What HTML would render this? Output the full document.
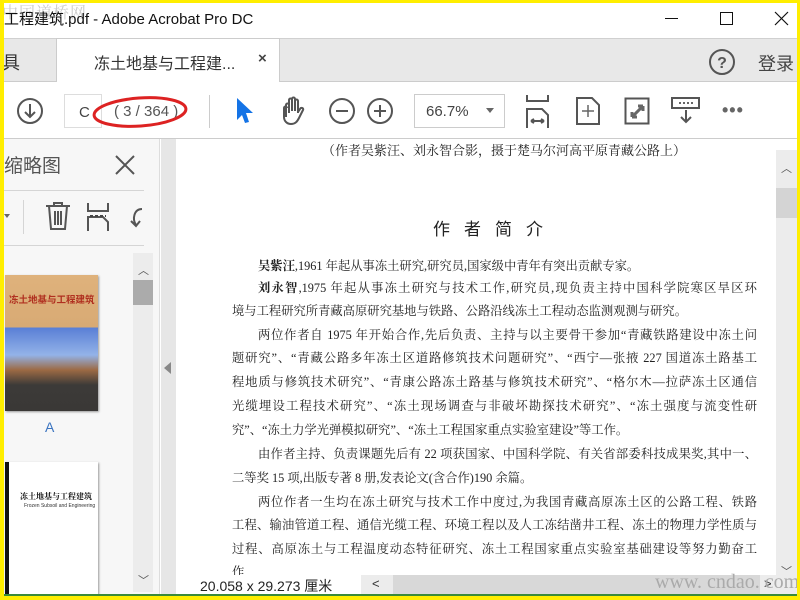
<!DOCTYPE html>
<html><head><meta charset="utf-8"><style>
*{margin:0;padding:0;box-sizing:border-box}
body{width:800px;height:600px;overflow:hidden;background:#fff;position:relative;font-family:"Liberation Sans","Noto Sans CJK SC",sans-serif}
.a{position:absolute}
.doc{font-family:"Liberation Serif","Noto Serif CJK SC",serif;font-size:12.3px;color:#222;white-space:nowrap}
.j{position:absolute;left:232px;width:525px;text-align:justify;text-align-last:justify;height:18px;line-height:18px;overflow:hidden}
.i{left:258px;width:499px}
.ico{stroke:#555;fill:none;stroke-width:2}
</style></head><body>
<!-- title bar -->
<div class="a" style="left:0;top:0;width:800px;height:38px;background:#fff"></div>
<div class="a" style="left:2px;top:0;font-size:16px;color:#ccc;letter-spacing:1px;font-family:'Noto Serif CJK SC',serif">中国道桥网</div>
<div class="a" style="left:4px;top:8px;font-size:15px;color:#111">工程建筑.pdf - Adobe Acrobat Pro DC</div>
<div class="a" style="left:665px;top:18px;width:13px;height:1px;background:#111"></div>
<div class="a" style="left:720px;top:12px;width:13px;height:13px;border:1px solid #111"></div>
<svg class="a" style="left:774px;top:11px" width="15" height="15"><path d="M1 1L14 14M14 1L1 14" stroke="#111" stroke-width="1.2"/></svg>
<!-- tab bar -->
<div class="a" style="left:0;top:38px;width:800px;height:44px;background:#e8e8e8;border-top:1px solid #d0d0d0;border-bottom:1px solid #ccc"></div>
<div class="a" style="left:56px;top:38px;width:224px;height:44px;background:#fff;border-left:1px solid #ccc;border-right:1px solid #ccc;border-top:1px solid #ccc"></div>
<div class="a" style="left:2px;top:49px;font-size:18px;color:#333">具</div>
<div class="a" style="left:94px;top:50px;font-size:16px;color:#333">冻土地基与工程建...</div>
<div class="a" style="left:258px;top:50px;font-size:15px;color:#444;font-weight:bold">×</div>
<svg class="a" style="left:708px;top:48px" width="28" height="28"><circle cx="14" cy="14" r="12" class="ico"/><text x="14" y="20" text-anchor="middle" font-size="16" font-weight="bold" fill="#555" font-family="Liberation Sans">?</text></svg>
<div class="a" style="left:758px;top:50px;font-size:18px;color:#444">登录</div>
<!-- toolbar -->
<div class="a" style="left:0;top:82px;width:800px;height:57px;background:#fff;border-bottom:1px solid #ccc"></div>
<svg class="a" style="left:16px;top:97px" width="28" height="28"><circle cx="14" cy="14" r="12" class="ico"/><path d="M14 7V20M9 15l5 5 5-5" class="ico"/></svg>
<div class="a" style="left:64px;top:94px;width:38px;height:34px;border:1px solid #ddd;background:#fff;font-size:15px;color:#444;padding:9px 0 0 14px">C</div>
<div class="a" style="left:114px;top:103px;font-size:15px;color:#555">( 3 / 364 )</div>
<svg class="a" style="left:92px;top:92px" width="100" height="40"><ellipse cx="48" cy="20" rx="46" ry="14" fill="none" stroke="#d22" stroke-width="3" transform="rotate(-4 48 20)"/></svg>
<div class="a" style="left:209px;top:95px;width:1px;height:33px;background:#ccc"></div>
<svg class="a" style="left:234px;top:96px" width="22" height="30"><path d="M3 2L19 17L12 17L15 26L11 27L8 19L3 24Z" fill="#1473e6"/></svg>
<svg class="a" style="left:278px;top:95px" width="30" height="32"><path d="M8 22V10c0-2 3-2 3 0v8M11 15V5c0-2 3-2 3 0v11M14 15V4c0-2 3-2 3 0v12M17 16V6c0-2 3-2 3 0v12M20 17l2-3c1-2 4-1 3 1l-4 8c-2 4-4 6-8 6-4 0-7-3-7-7V13c0-2 3-2 3 0" class="ico" stroke-width="1.8"/></svg>
<svg class="a" style="left:328px;top:97px" width="28" height="28"><circle cx="14" cy="14" r="12" class="ico"/><path d="M8 14H20" class="ico"/></svg>
<svg class="a" style="left:366px;top:97px" width="28" height="28"><circle cx="14" cy="14" r="12" class="ico"/><path d="M8 14H20M14 8V20" class="ico"/></svg>
<div class="a" style="left:414px;top:94px;width:91px;height:34px;border:1px solid #ccc;font-size:15px;color:#444;padding:8px 0 0 11px">66.7%</div>
<div class="a" style="left:486px;top:108px;border-left:4px solid transparent;border-right:4px solid transparent;border-top:5px solid #666"></div>
<svg class="a" style="left:525px;top:95px" width="26" height="33"><path d="M2 0V6H23V0M2 33V14H17l6 6V33M6 26H19M6 26l3-2M6 26l3 2M19 26l-3-2M19 26l-3 2" class="ico" stroke-width="2.5" stroke="#666"/></svg>
<svg class="a" style="left:575px;top:96px" width="26" height="30"><path d="M2 2H17l7 7V28H2Z" class="ico" stroke="#666" stroke-width="2.5"/><path d="M13 9V21M7 15H19" stroke="#666" stroke-width="1.5"/></svg>
<svg class="a" style="left:624px;top:97px" width="26" height="28"><rect x="1.5" y="1.5" width="23" height="25" class="ico" stroke="#666" stroke-width="2.5"/><path d="M8 20L19 9M8 20V15M8 20H13M19 9V14M19 9H14" stroke="#666" stroke-width="3"/></svg>
<svg class="a" style="left:671px;top:96px" width="30" height="30"><rect x="1" y="2" width="27" height="10" class="ico" stroke="#666" stroke-width="2.5"/><path d="M8 7h2M12 7h2M16 7h2M20 7h2" stroke="#666" stroke-width="2"/><path d="M15 14V26M10 21l5 5 5-5" class="ico" stroke="#666" stroke-width="2.5"/></svg>
<div class="a" style="left:722px;top:100px;font-size:18px;color:#666;font-weight:bold;letter-spacing:1px">•••</div>
<!-- left panel -->
<div class="a" style="left:0;top:139px;width:160px;height:456px;background:#f7f7f7;border-right:1px solid #ddd"></div>
<div class="a" style="left:4px;top:151px;font-size:19px;color:#555">缩略图</div>
<svg class="a" style="left:114px;top:154px" width="22" height="22"><path d="M2 2L20 20M20 2L2 20" stroke="#555" stroke-width="2"/></svg>
<div class="a" style="left:4px;top:190px;width:140px;height:1px;background:#d5d5d5"></div>
<div class="a" style="left:4px;top:245px;width:140px;height:1px;background:#d5d5d5"></div>
<div class="a" style="left:23px;top:200px;width:1px;height:34px;background:#d5d5d5"></div>
<div class="a" style="left:4px;top:214px;border-left:3px solid transparent;border-right:3px solid transparent;border-top:4px solid #666"></div>
<svg class="a" style="left:44px;top:201px" width="28" height="30"><path d="M2 5H26M10 5V2H18V5M5 5L7 28H21L23 5M11 10V24M14 10V24M17 10V24" class="ico" stroke="#aaa" stroke-width="2"/></svg>
<svg class="a" style="left:86px;top:203px" width="24" height="28"><path d="M2 0V8H22V0M2 28V14H17l5 5V28" class="ico" stroke="#444" stroke-width="2.5"/><path d="M4 13H20" stroke="#444" stroke-width="2" stroke-dasharray="3 2"/></svg>
<svg class="a" style="left:126px;top:205px" width="20" height="26"><path d="M16 4C8 4 6 14 10 20M5 16l5 5 4-5" class="ico" stroke="#bbb" stroke-width="2.5"/></svg>
<div class="a" style="left:133px;top:253px;width:20px;height:339px;background:#ececec"></div>
<div class="a" style="left:133px;top:280px;width:20px;height:25px;background:#ababab"></div>
<div class="a" style="left:138px;top:262px;font-size:11px;color:#555">︿</div>
<div class="a" style="left:138px;top:572px;font-size:11px;color:#555">﹀</div>
<div class="a" style="left:5px;top:275px;width:93px;height:136px;background:linear-gradient(#dfb27c 0,#d8aa74 52px,#5a7fd6 53px,#93b3e8 80px,#9c6a44 95px,#3c3a38 110px,#3a3836 136px);box-shadow:1px 1px 2px #999"></div>
<div class="a" style="left:9px;top:292px;font-size:9.5px;color:#b03020;font-weight:bold;white-space:nowrap">冻土地基与工程建筑</div>
<div class="a" style="left:45px;top:419px;font-size:14px;color:#3b74c0">A</div>
<div class="a" style="left:5px;top:462px;width:93px;height:133px;background:#fff;border-left:4px solid #111;box-shadow:1px 1px 2px #999"></div>
<div class="a" style="left:20px;top:491px;font-size:8px;color:#111;font-weight:bold;white-space:nowrap;font-family:'Noto Serif CJK SC',serif">冻土地基与工程建筑</div>
<div class="a" style="left:24px;top:503px;font-size:5px;color:#333;white-space:nowrap">Frozen Subsoil and Engineering</div>
<!-- splitter -->
<div class="a" style="left:161px;top:139px;width:15px;height:456px;background:#e6e6e6"></div>
<div class="a" style="left:164px;top:362px;border-top:6px solid transparent;border-bottom:6px solid transparent;border-right:7px solid #888"></div>
<!-- page -->
<div class="a" style="left:176px;top:139px;width:600px;height:436px;background:#fff"></div>
<div class="a" style="left:776px;top:150px;width:21px;height:425px;background:#ececec"></div>
<div class="a" style="left:776px;top:188px;width:21px;height:30px;background:#d4d4d4"></div>
<div class="a" style="left:781px;top:160px;font-size:11px;color:#555">︿</div>
<div class="a" style="left:781px;top:563px;font-size:11px;color:#555">﹀</div>
<div class="doc">
<div class="a" style="left:322px;top:140px;font-size:13px">（作者吴紫汪、刘永智合影，摄于楚马尔河高平原青藏公路上）</div>
<div class="a" style="left:433px;top:215px;font-size:17px;letter-spacing:14px;font-family:'Noto Sans CJK SC',sans-serif">作者简介</div>
<div class="j i" style="top:257px;text-align-last:left"><b>吴紫汪</b>,1961 年起从事冻土研究,研究员,国家级中青年有突出贡献专家。</div>
<div class="j i" style="top:279px"><b>刘永智</b>,1975 年起从事冻土研究与技术工作,研究员,现负责主持中国科学院寒区旱区环</div>
<div class="j" style="top:302px;text-align-last:left">境与工程研究所青藏高原研究基地与铁路、公路沿线冻土工程动态监测观测与研究。</div>
<div class="j i" style="top:326px">两位作者自 1975 年开始合作,先后负责、主持与以主要骨干参加“青藏铁路建设中冻土问</div>
<div class="j" style="top:349px">题研究”、“青藏公路多年冻土区道路修筑技术问题研究”、“西宁—张掖 227 国道冻土路基工</div>
<div class="j" style="top:373px">程地质与修筑技术研究”、“青康公路冻土路基与修筑技术研究”、“格尔木—拉萨冻土区通信</div>
<div class="j" style="top:397px">光缆埋设工程技术研究”、“冻土现场调查与非破坏勘探技术研究”、“冻土强度与流变性研</div>
<div class="j" style="top:421px;text-align-last:left">究”、“冻土力学光弹模拟研究”、“冻土工程国家重点实验室建设”等工作。</div>
<div class="j i" style="top:445px">由作者主持、负责课题先后有 22 项获国家、中国科学院、有关省部委科技成果奖,其中一、</div>
<div class="j" style="top:469px;text-align-last:left">二等奖 15 项,出版专著 8 册,发表论文(含合作)190 余篇。</div>
<div class="j i" style="top:493px">两位作者一生均在冻土研究与技术工作中度过,为我国青藏高原冻土区的公路工程、铁路</div>
<div class="j" style="top:516px">工程、输油管道工程、通信光缆工程、环境工程以及人工冻结凿井工程、冻土的物理力学性质与</div>
<div class="j" style="top:540px">过程、高原冻土与工程温度动态特征研究、冻土工程国家重点实验室基础建设等努力勤奋工</div>
<div class="j" style="top:563px;text-align-last:left">作</div>
</div>
<!-- bottom bar -->
<div class="a" style="left:176px;top:575px;width:185px;height:20px;background:#fff"></div>
<div class="a" style="left:200px;top:576px;font-size:14px;color:#222">20.058 x 29.273 厘米</div>
<div class="a" style="left:361px;top:575px;width:436px;height:20px;background:#ececec"></div>
<div class="a" style="left:393px;top:575px;width:367px;height:20px;background:#d8d8d8"></div>
<div class="a" style="left:372px;top:576px;font-size:13px;color:#333">&lt;</div>
<div class="a" style="left:764px;top:576px;font-size:13px;color:#333">&gt;</div>
<div class="a" style="left:655px;top:571px;font-size:20px;color:#aaa;font-family:'Liberation Serif',serif;white-space:nowrap">www. cndao. com</div>
<div class="a" style="left:0;top:594px;width:800px;height:2px;background:#3a8a3a"></div>
<!-- yellow frame -->
<div class="a" style="left:0;top:0;width:800px;height:3px;background:#ffee00"></div>
<div class="a" style="left:0;top:0;width:4px;height:600px;background:#ffee00"></div>
<div class="a" style="left:797px;top:0;width:3px;height:600px;background:#ffee00"></div>
<div class="a" style="left:0;top:596px;width:800px;height:4px;background:#ffee00"></div>
</body></html>
